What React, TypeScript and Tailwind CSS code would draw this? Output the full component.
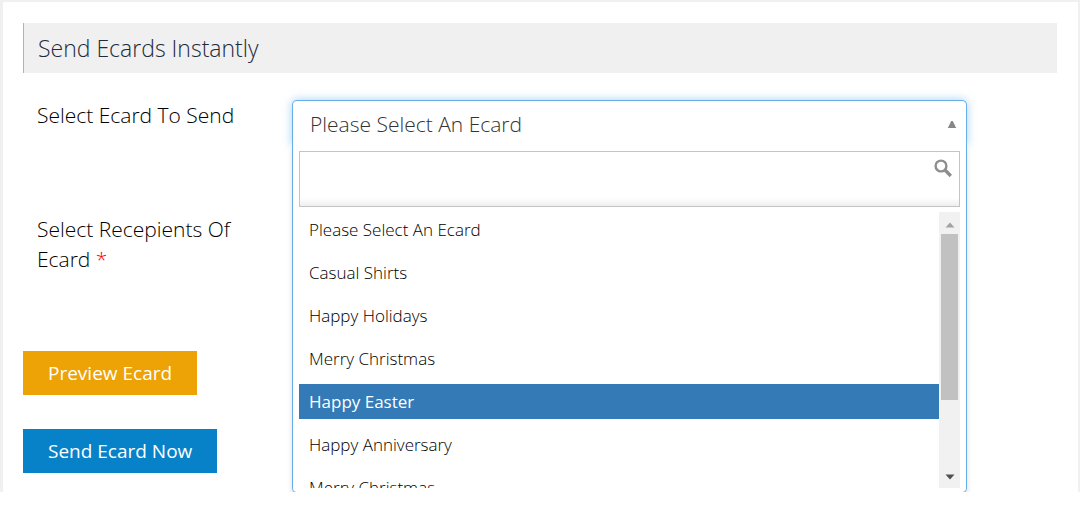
import { useState } from "react";

const ecards = [
  "Please Select An Ecard",
  "Casual Shirts",
  "Happy Holidays",
  "Merry Christmas",
  "Happy Easter",
  "Happy Anniversary",
  "Merry Christmas",
];

function EcardSelect() {
  const [open, setOpen] = useState(true);
  const [selected, setSelected] = useState(0);
  const [active, setActive] = useState(4);
  const [search, setSearch] = useState("");

  const pick = (index: number) => {
    setSelected(index);
    setOpen(false);
  };

  return (
    <div className="relative">
      <button
        id="ecard"
        type="button"
        aria-haspopup="listbox"
        aria-expanded={open}
        onClick={() => setOpen(!open)}
        className="flex h-[46px] w-full items-center justify-between rounded-t-[5px] border border-b-0 border-[#66afe9] bg-white pl-[17px] pr-[9px] pt-[2px] text-[21px] font-light text-[#333] shadow-[0_0_10px_rgba(102,175,233,0.6)]"
      >
        {ecards[selected]}
        <svg width="10" height="8" viewBox="0 0 10 8" aria-hidden="true">
          <path d="M4.2 0 H5.8 L9.2 7 H0.8 Z" fill="#888" />
        </svg>
      </button>

      {open && (
        <div className="absolute inset-x-0 top-full rounded-b-[5px] border border-t-0 border-[#66afe9] bg-white px-[6px] pb-1 pt-[5px] shadow-[0_4px_5px_rgba(0,0,0,0.15)]">
          <div className="relative">
            <input
              type="text"
              aria-label="Search ecards"
              value={search}
              onChange={(e) => setSearch(e.target.value)}
              className="block h-14 w-full border border-[#c4c4c4] bg-linear-to-t from-[#eeeeee] to-white to-15% pl-2 pr-8 text-lg outline-none"
            />
            <svg
              className="absolute right-2 top-2"
              width="18"
              height="18"
              viewBox="0 0 18 18"
              fill="none"
              stroke="#8e8e8e"
              aria-hidden="true"
            >
              <circle cx="7" cy="7" r="5.4" strokeWidth="2.4" />
              <path d="M10.8 10.8 L16.8 17" strokeWidth="3.4" />
            </svg>
          </div>

          <div className="mt-[5px] flex h-[276px]">
            <ul role="listbox" className="flex flex-1 flex-col gap-2 overflow-hidden">
              {ecards.map((name, index) => (
                <li
                  key={index}
                  role="option"
                  aria-selected={index === active}
                  onMouseEnter={() => setActive(index)}
                  onClick={() => pick(index)}
                  className={
                    index === active
                      ? "h-[35px] shrink-0 cursor-pointer bg-[#337ab7] pl-[10px] text-[17px] leading-[35px] text-white"
                      : "h-[35px] shrink-0 cursor-pointer pl-[10px] text-[17px] font-light leading-[35px] text-black"
                  }
                >
                  {name}
                </li>
              ))}
            </ul>
            <div
              aria-hidden="true"
              className="flex w-[21px] flex-col items-center justify-between bg-[#f1f1f1]"
            >
              <div className="flex w-full flex-col items-center">
                <svg className="mb-[6px] mt-[10px]" width="10" height="6" viewBox="0 0 10 6">
                  <path d="M5 0.5 L9.5 5.5 H0.5 Z" fill="#a3a3a3" />
                </svg>
                <div className="h-[166px] w-[17px] bg-[#c1c1c1]" />
              </div>
              <svg className="mb-2" width="10" height="6" viewBox="0 0 10 6">
                <path d="M0.5 0.5 H9.5 L5 5.5 Z" fill="#505050" />
              </svg>
            </div>
          </div>
        </div>
      )}
    </div>
  );
}

export default function App() {
  return (
    <main className="overflow-hidden border-l-[3px] border-r-2 border-t-2 border-[#f0f0f0] bg-white pb-[19px] pl-5 pr-[21px] pt-[21px] font-['Open_Sans',sans-serif]">
      <h1 className="mb-[27px] border-l border-[#eeb211] bg-[#f0f0f0] py-[10px] pl-[14px] text-[23px] font-light leading-[30px] text-[#1f2b3b]">
        Send Ecards Instantly
      </h1>

      <form onSubmit={(e) => e.preventDefault()}>
        <div className="mb-[68px] grid grid-cols-[269fr_675fr_90fr]">
          <label htmlFor="ecard" className="pl-[14px] pr-8 text-[21px] font-light leading-[30px] text-black">
            Select Ecard To Send
          </label>
          <EcardSelect />
        </div>

        <div className="mb-[77px] grid grid-cols-[269fr_675fr_90fr]">
          <span className="pl-[14px] pr-8 text-[21px] font-light leading-[30px] text-black">
            Select Recepients Of Ecard <span className="text-[#ff0000]">*</span>
          </span>
        </div>

        <div className="flex flex-col items-start gap-[34px]">
          <button type="button" className="h-11 bg-[#eda205] px-[25px] text-[19px] text-white">
            Preview Ecard
          </button>
          <button type="submit" className="h-11 bg-[#0782c9] px-[25px] text-[19px] text-white">
            Send Ecard Now
          </button>
        </div>
      </form>
    </main>
  );
}
